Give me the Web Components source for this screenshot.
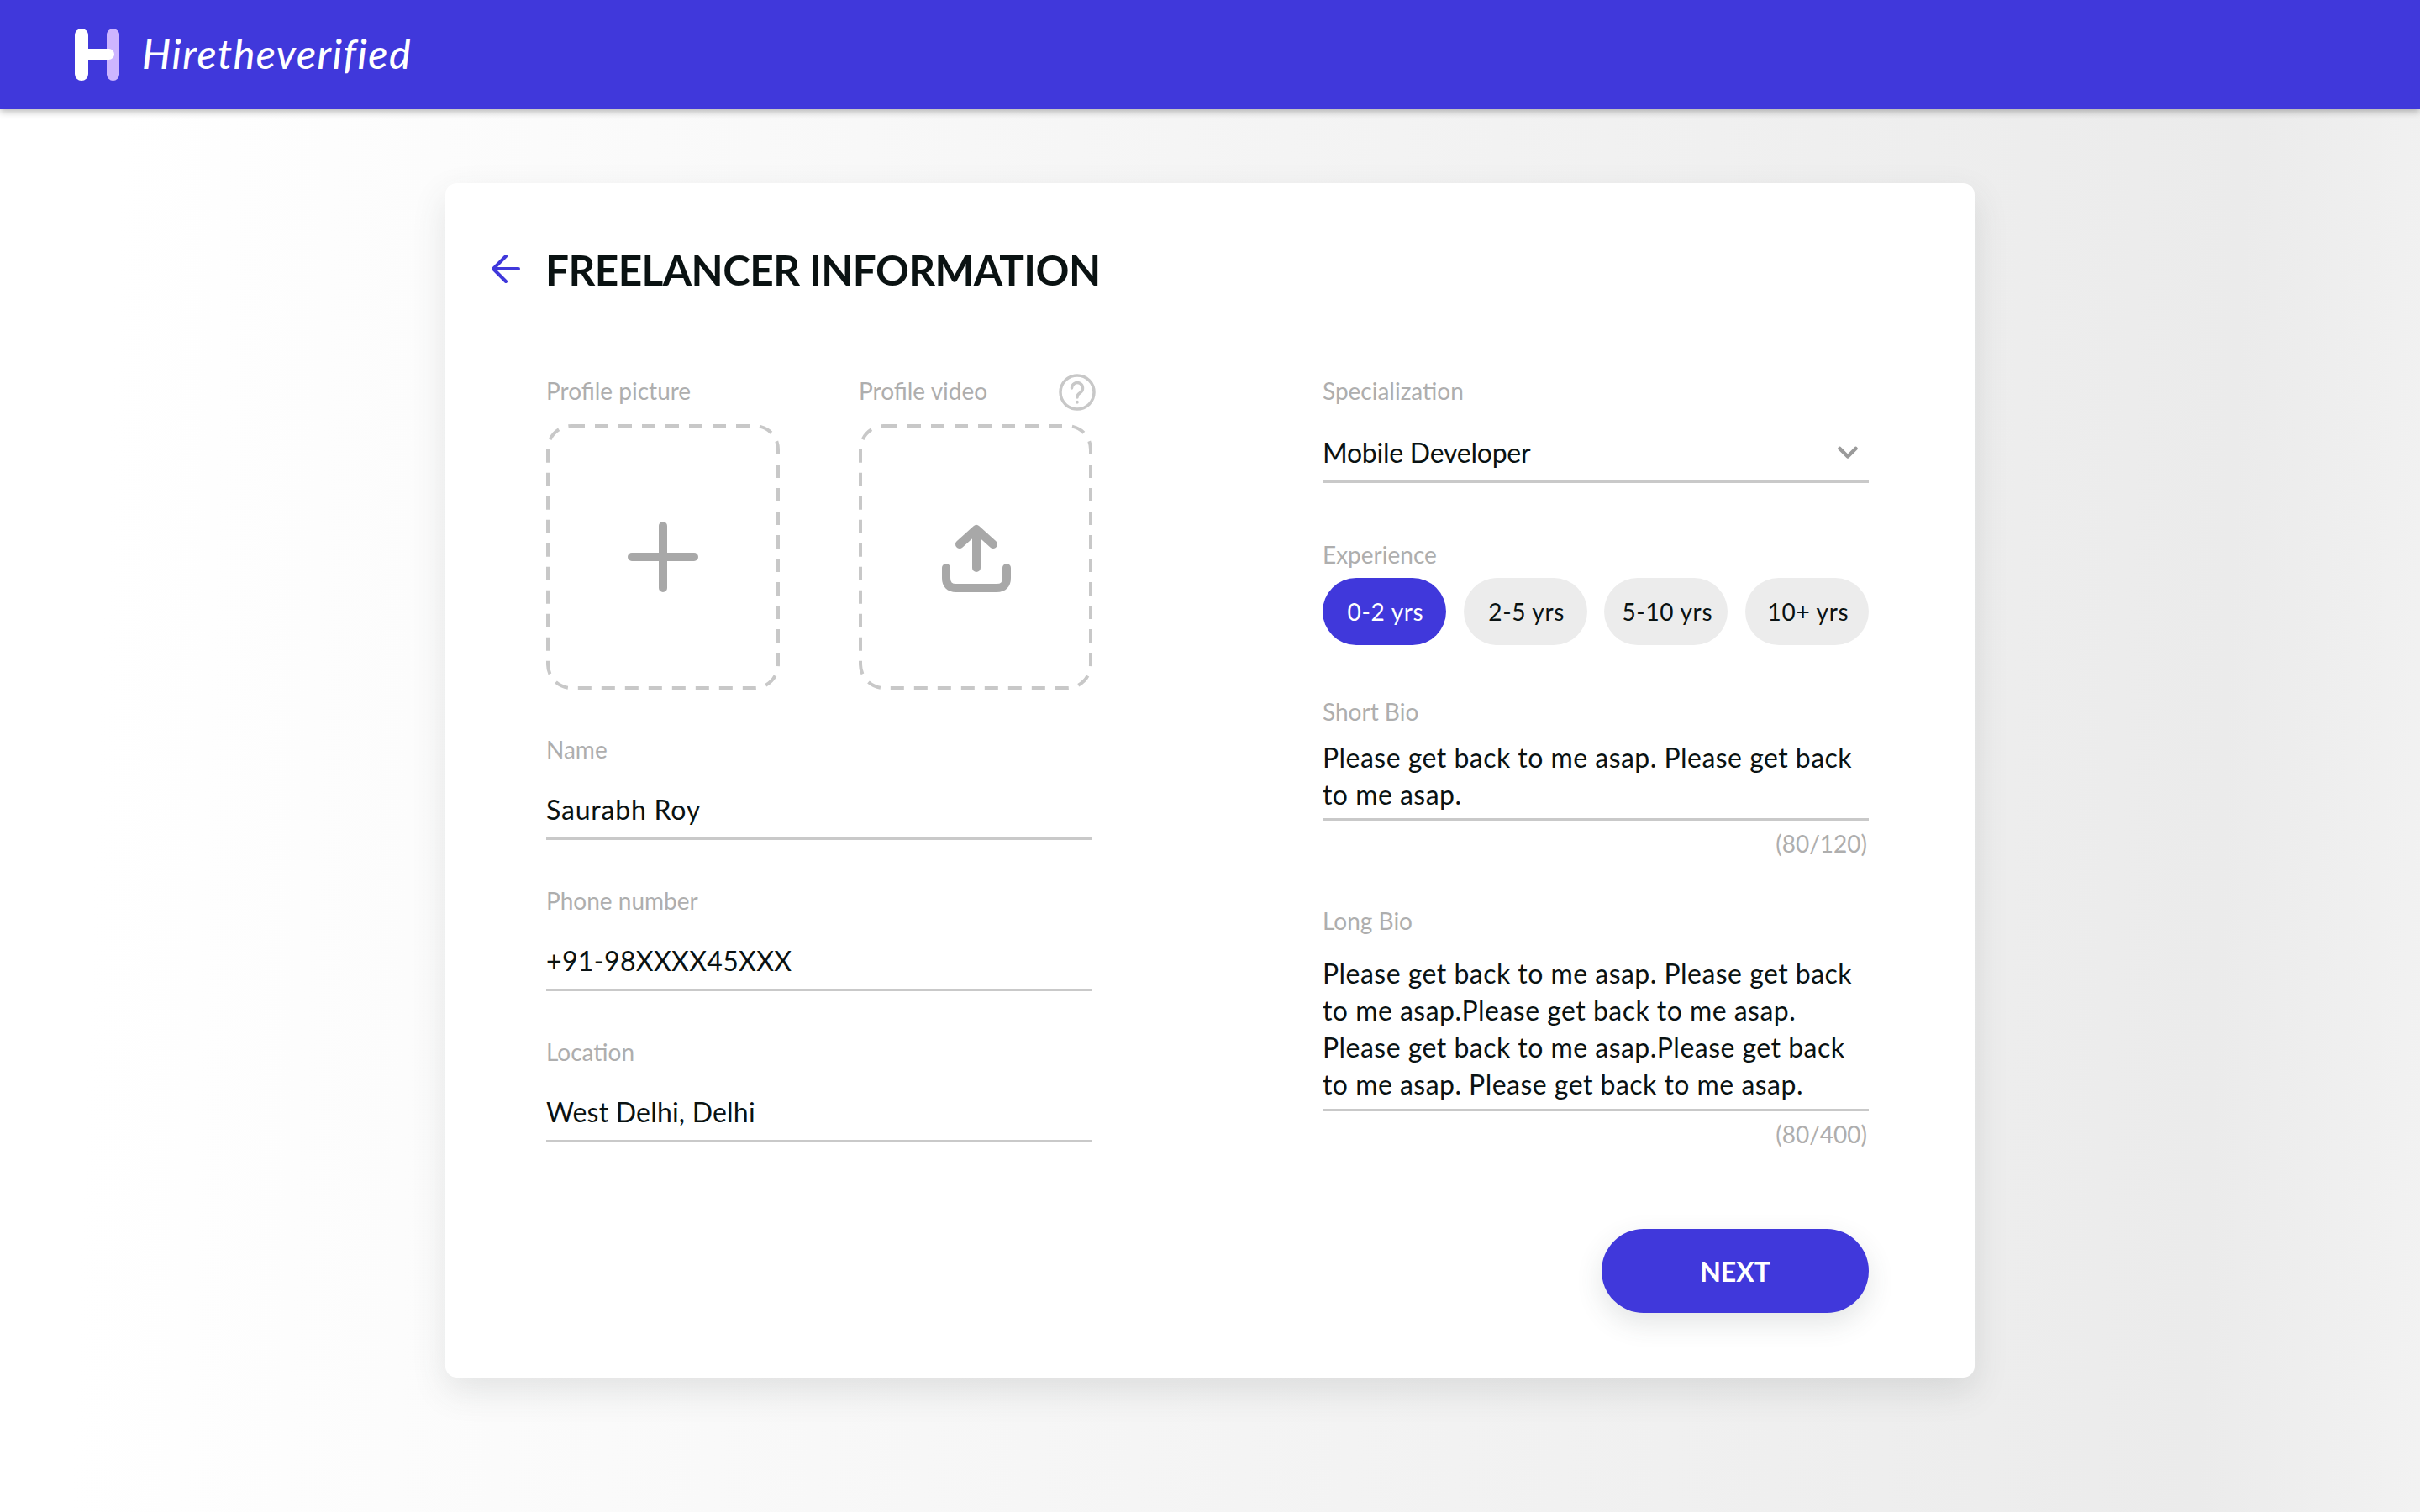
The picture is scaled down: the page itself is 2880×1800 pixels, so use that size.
<!doctype html>
<html>
  <head>
    <title>Hiretheverified • Freelancer information</title>
    <style>
      html, body { margin: 0; height: 100%; }
      body {
        font-family: Lato, "Noto Sans", sans-serif;
        color: #0a1212;
        background: linear-gradient(92deg, #ffffff 5%, #ebebeb 91%, #f2f2f2 100%);
        overflow: hidden;
      }
    </style>
  </head>
  <body>
    <hv-header>Hiretheverified</hv-header>

    <hv-card heading="FREELANCER INFORMATION">
      <hv-column slot="left">
        <hv-uploads>
          <hv-upload label="Profile picture" icon="plus"></hv-upload>
          <hv-upload label="Profile video" icon="upload" help></hv-upload>
        </hv-uploads>
        <hv-field label="Name" style="--track: .8px">Saurabh Roy</hv-field>
        <hv-field label="Phone number" style="--track: .35px">+91-98XXXX45XXX</hv-field>
        <hv-field label="Location" style="--track: .2px">West Delhi, Delhi</hv-field>
      </hv-column>

      <hv-column slot="right">
        <hv-field label="Specialization" select style="--track: -.25px; --gap: 32px; --pad: 11px; --after: 65px">Mobile Developer</hv-field>
        <hv-chips label="Experience">
          <hv-chip selected>0-2 yrs</hv-chip>
          <hv-chip>2-5 yrs</hv-chip>
          <hv-chip>5-10 yrs</hv-chip>
          <hv-chip>10+ yrs</hv-chip>
        </hv-chips>
        <hv-field label="Short Bio" count="(80/120)" style="--track: .47px; --gap: 13px; --pad: 6px; --after: 54px">Please get back to me asap. Please get back<br>to me asap.</hv-field>
        <hv-field label="Long Bio" count="(80/400)" style="--track: .47px; --gap: 21px; --pad: 7px">Please get back to me asap. Please get back<br>to me asap.Please get back to me asap.<br>Please get back to me asap.Please get back<br>to me asap. Please get back to me asap.</hv-field>
        <hv-button>NEXT</hv-button>
      </hv-column>
    </hv-card>

    <script>
      const shadow = (el, html) => {
        el.attachShadow({ mode: 'open' }).innerHTML = html
      }

      customElements.define('hv-header', class extends HTMLElement {
        constructor() {
          super()
          shadow(this, `
            <style>
              :host {
                display: flex;
                align-items: center;
                gap: 27px;
                box-sizing: border-box;
                height: 130px;
                padding: 0 0 0 89px;
                background: #4038db;
                box-shadow: 0 3px 8px rgba(0, 0, 0, .28);
              }
              svg { display: block; }
              span {
                margin-top: -3px;
                font-size: 48px;
                font-style: italic;
                font-weight: 500;
                letter-spacing: 1.55px;
                color: #fff;
              }
            </style>
            <svg width="53" height="62" viewBox="0 0 53 62">
              <rect x="38" y="0" width="15" height="62" rx="7.500" fill="#cdb5ff"/>
              <rect x="0" y="0" width="16" height="62" rx="8" fill="#fff"/>
              <rect x="8" y="24" width="39" height="13" rx="6.500" fill="#fff"/>
            </svg>
            <span><slot></slot></span>
          `)
        }
      })

      customElements.define('hv-card', class extends HTMLElement {
        constructor() {
          super()
          shadow(this, `
            <style>
              :host {
                display: block;
                box-sizing: border-box;
                width: 1820px;
                height: 1422px;
                margin: 88px 0 0 530px;
                padding: 74px 126px 0 54px;
                background: #fff;
                border-radius: 14px;
                box-shadow: 0 16px 40px rgba(60, 70, 70, .13);
              }
              header {
                display: flex;
                align-items: center;
                gap: 30px;
                height: 60px;
              }
              svg { display: block; margin: -4px 0 0 1px; }
              h1 {
                margin: -2px 0 0;
                font-size: 49.500px;
                font-weight: 700;
                letter-spacing: -.55px;
                line-height: 60px;
              }
              .cols {
                display: grid;
                grid-template-columns: 650px 650px;
                column-gap: 274px;
                margin: 93px 0 0 66px;
              }
            </style>
            <header>
              <svg width="34" height="34" viewBox="0 0 34 34" fill="none" stroke="#4038db" stroke-width="4" stroke-linecap="round" stroke-linejoin="round">
                <path d="M32 17H3M17 2 2 17l15 15"/>
              </svg>
              <h1></h1>
            </header>
            <div class="cols">
              <div><slot name="left"></slot></div>
              <div><slot name="right"></slot></div>
            </div>
          `)
          this.shadowRoot.querySelector('h1').textContent = this.getAttribute('heading')
        }
      })

      customElements.define('hv-column', class extends HTMLElement {
        constructor() {
          super()
          shadow(this, `
            <style>:host { display: block; }</style>
            <slot></slot>
          `)
        }
      })

      customElements.define('hv-uploads', class extends HTMLElement {
        constructor() {
          super()
          shadow(this, `
            <style>
              :host {
                display: grid;
                grid-template-columns: 278px 278px;
                justify-content: space-between;
                margin-bottom: 51px;
              }
            </style>
            <slot></slot>
          `)
        }
      })

      const uploadIcons = {
        plus: '<path d="M42 5v74M5 42h74"/>',
        upload: '<path d="M43 55V9M23 27 43 9l20 18M7 55v12q0 12 12 12h48q12 0 12-12V55"/>'
      }

      customElements.define('hv-upload', class extends HTMLElement {
        constructor() {
          super()
          const help = this.hasAttribute('help') ? `
            <svg class="help" width="44" height="44" viewBox="0 0 44 44" fill="none" stroke="#c8c8c8" stroke-width="3.500" stroke-linecap="round" stroke-linejoin="round">
              <circle cx="22" cy="22" r="20"/>
              <path d="M15.500 17a6.500 6.500 0 1 1 10 5.500c-2.500 1.600-3.500 3-3.500 5.500"/>
              <path d="M22 33.500v.5"/>
            </svg>` : ''
          shadow(this, `
            <style>
              :host { display: block; position: relative; }
              .label {
                height: 40px;
                margin-bottom: 20px;
                font-size: 28px;
                line-height: 40px;
                color: #aeaeae;
              }
              .box {
                display: flex;
                align-items: center;
                justify-content: center;
                position: relative;
                width: 278px;
                height: 316px;
              }
              .frame { position: absolute; inset: 0; }
              .help { position: absolute; left: 238px; top: 0; }
            </style>
            <div class="label"></div>
            ${help}
            <div class="box">
              <svg class="frame" width="278" height="316">
                <rect x="2" y="2" width="274" height="312" rx="28" fill="none" stroke="#c8c8c8" stroke-width="4" stroke-dasharray="16 12"/>
              </svg>
              <svg width="84" height="84" viewBox="0 0 84 84" fill="none" stroke="#a8a8a8" stroke-width="10" stroke-linecap="round" stroke-linejoin="round">
                ${uploadIcons[this.getAttribute('icon')]}
              </svg>
            </div>
          `)
          this.shadowRoot.querySelector('.label').textContent = this.getAttribute('label')
        }
      })

      customElements.define('hv-field', class extends HTMLElement {
        constructor() {
          super()
          const chevron = this.hasAttribute('select') ? `
            <svg width="24" height="16" viewBox="0 0 24 16" fill="none" stroke="#9a9a9a" stroke-width="4.500" stroke-linecap="round" stroke-linejoin="round">
              <path d="M2.500 3l9.500 9.500L21.500 3"/>
            </svg>` : ''
          const count = this.getAttribute('count')
          shadow(this, `
            <style>
              :host { display: block; margin-bottom: var(--after, 52px); }
              .label {
                height: 40px;
                font-size: 28px;
                line-height: 40px;
                color: #aeaeae;
              }
              .value {
                display: flex;
                align-items: center;
                justify-content: space-between;
                padding: var(--gap, 30px) 13px var(--pad, 11px) 0;
                font-size: 32px;
                line-height: 44px;
                letter-spacing: var(--track, 0);
                border-bottom: 3px solid #c9c9c9;
              }
              .count {
                margin-top: 9px;
                padding-right: 2px;
                text-align: right;
                font-size: 28px;
                line-height: 36px;
                color: #aeaeae;
              }
            </style>
            <div class="label"></div>
            <div class="value"><span><slot></slot></span>${chevron}</div>
            ${count ? '<div class="count"></div>' : ''}
          `)
          this.shadowRoot.querySelector('.label').textContent = this.getAttribute('label')
          if (count) this.shadowRoot.querySelector('.count').textContent = count
        }
      })

      customElements.define('hv-chips', class extends HTMLElement {
        constructor() {
          super()
          shadow(this, `
            <style>
              :host { display: block; margin-bottom: 59px; }
              .label {
                height: 40px;
                font-size: 28px;
                line-height: 40px;
                color: #aeaeae;
              }
              .row {
                display: grid;
                grid-template-columns: repeat(4, 147px);
                justify-content: space-between;
                margin-top: 8px;
              }
            </style>
            <div class="label"></div>
            <div class="row"><slot></slot></div>
          `)
          this.shadowRoot.querySelector('.label').textContent = this.getAttribute('label')
        }
      })

      customElements.define('hv-chip', class extends HTMLElement {
        constructor() {
          super()
          shadow(this, `
            <style>
              :host {
                display: flex;
                align-items: center;
                justify-content: center;
                box-sizing: border-box;
                height: 80px;
                padding-left: 3px;
                border-radius: 40px;
                font-size: 28px;
                letter-spacing: .7px;
                background: #ececec;
                color: #0a1212;
              }
              :host([selected]) { background: #4038db; color: #fff; }
            </style>
            <slot></slot>
          `)
        }
      })

      customElements.define('hv-button', class extends HTMLElement {
        constructor() {
          super()
          shadow(this, `
            <style>
              :host {
                display: flex;
                align-items: center;
                justify-content: center;
                width: 318px;
                height: 100px;
                margin: 95px 0 0 auto;
                border-radius: 50px;
                font-size: 32px;
                font-weight: 700;
                color: #fff;
                background: #4038db;
                box-shadow: 0 12px 32px rgba(60, 70, 70, .14);
              }
            </style>
            <slot></slot>
          `)
        }
      })
    </script>
  </body>
</html>
